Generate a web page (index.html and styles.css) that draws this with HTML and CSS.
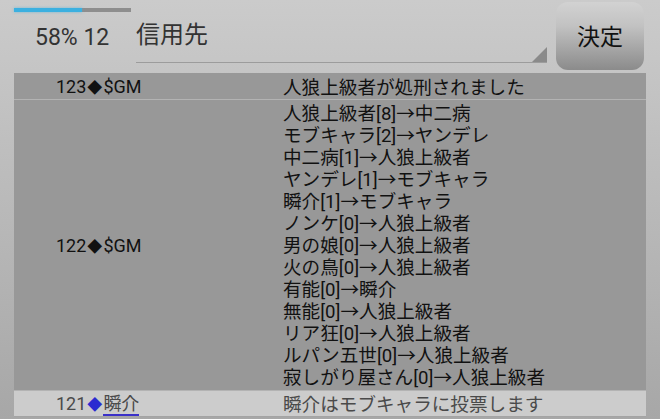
FILE: index.html
```html
<!DOCTYPE html>
<html lang="ja">
<head>
    <meta charset="UTF-8">
    <meta name="viewport" content="width=device-width, initial-scale=1.0">
    <title>投票</title>
    <link rel="stylesheet" href="styles.css">
</head>
<body>

    <div class="header">
        <div class="status">
            <div class="progress"><div class="progress-fill" style="width: 58%"></div></div>
            <div class="count">58% 12</div>
        </div>
        <div class="spinner">
            <span class="spinner-text">信用先</span>
            <span class="spinner-arrow"></span>
        </div>
        <button class="decide-button">決定</button>
    </div>

    <div class="log">
        <div class="log-row dark">
            <div class="log-who">123<span class="mark">◆</span>$GM</div>
            <div class="log-text">人狼上級者が処刑されました</div>
        </div>
        <div class="log-row dark">
            <div class="log-who">122<span class="mark">◆</span>$GM</div>
            <div class="log-text">
                人狼上級者[8]→中二病<br>
                モブキャラ[2]→ヤンデレ<br>
                中二病[1]→人狼上級者<br>
                ヤンデレ[1]→モブキャラ<br>
                瞬介[1]→モブキャラ<br>
                ノンケ[0]→人狼上級者<br>
                男の娘[0]→人狼上級者<br>
                火の鳥[0]→人狼上級者<br>
                有能[0]→瞬介<br>
                無能[0]→人狼上級者<br>
                リア狂[0]→人狼上級者<br>
                ルパン五世[0]→人狼上級者<br>
                寂しがり屋さん[0]→人狼上級者
            </div>
        </div>
        <div class="log-row light">
            <div class="log-who">121<span class="mark blue">◆</span><span class="player">瞬介</span></div>
            <div class="log-text">瞬介はモブキャラに投票します</div>
        </div>
    </div>

</body>
</html>
```

FILE: styles.css
```css
body {
    margin: 0;
    height: 419px;
    overflow: hidden;
    font-family: Roboto, "Noto Sans CJK JP", sans-serif;
    color: #333;
    background: linear-gradient(to bottom, #cbcbcb 0, #c5c5c5 70px, #a7a7a7 419px);
}
.header {
    display: flex;
    height: 73px;
}
.status {
    width: 117px;
    margin-left: 14px;
}
.progress {
    margin-top: 8px;
    height: 4px;
    background-color: #8e8e8e;
}
.progress-fill {
    height: 100%;
    background-color: #3bb0e0;
    box-shadow: 0 0 3px rgba(59, 176, 224, 0.6);
}
.count {
    margin-top: 13px;
    padding-left: 21px;
    font-size: 23px;
    line-height: 26px;
    white-space: nowrap;
}
/* выпадающий список "信用先" */
.spinner {
    position: relative;
    width: 411px;
    height: 62px;
    margin-left: 5px;
    border-bottom: 1px solid #9c9c9c;
}
.spinner-text {
    display: block;
    padding-top: 22px;
    font-size: 24px;
    line-height: 26px;
}
.spinner-arrow {
    position: absolute;
    right: 0;
    bottom: 0;
    width: 0;
    height: 0;
    border-left: 15px solid transparent;
    border-bottom: 15px solid #8a8a8a;
}
.decide-button {
    width: 88px;
    height: 68px;
    margin: 2px 0 0 9px;
    border: none;
    border-radius: 12px;
    background: linear-gradient(to bottom, #d2d2d2, #c2c2c2 35%, #8b8b8b);
    font-family: Roboto, "Noto Sans CJK JP", sans-serif;
    font-size: 23px;
    color: #111;
    padding: 0 0 2px;
    cursor: pointer;
}
.log {
    margin: 0 14px;
    font-size: 18px;
    line-height: 22px;
}
.log-row {
    display: grid;
    grid-template-columns: 269px 1fr;
    align-items: center;
    border-bottom: 1px solid #b3b3b3;
}
.log-row.dark {
    background-color: #989898;
    color: #111;
    padding: 3px 0 0;
}
.log-row.dark + .log-row.dark {
    padding: 3px 0 1px;
}
.log-row.light {
    background-color: #cccccc;
    color: #4a4a4a;
    padding: 2px 0 0;
    border-bottom-color: #a4a4a4;
}
.log-who {
    padding-left: 42px;
    white-space: nowrap;
}
.mark {
    font-size: 15px;
    margin: 0 1px;
}
.mark.blue {
    color: #2b2bd0;
}
.player {
    border-bottom: 2px solid #3a30c8;
}
.log-text {
    font-size: 18.6px;
    white-space: nowrap;
}
```
